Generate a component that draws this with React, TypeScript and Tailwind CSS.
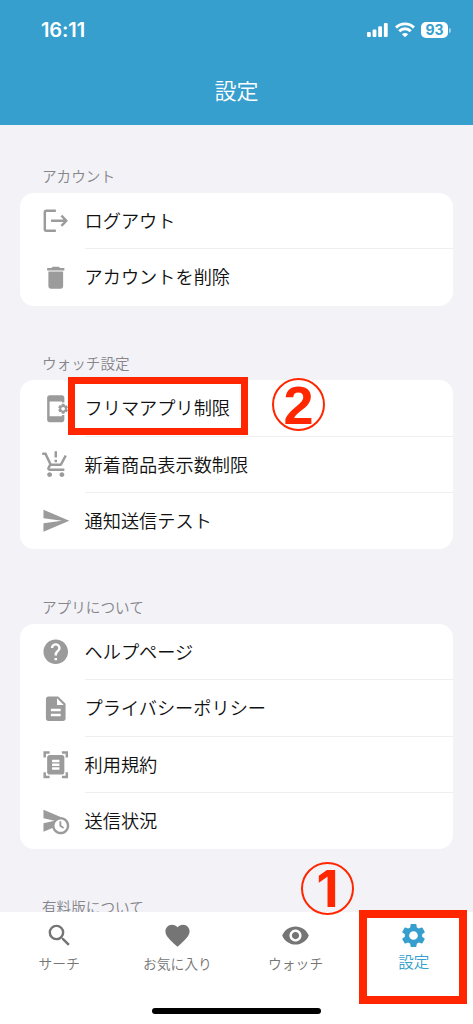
import type { IconType } from 'react-icons';
import {
  MdAppSettingsAlt,
  MdDelete,
  MdDescription,
  MdDocumentScanner,
  MdFavorite,
  MdHelp,
  MdProductionQuantityLimits,
  MdRemoveRedEye,
  MdScheduleSend,
  MdSearch,
  MdSend,
  MdSettings,
} from 'react-icons/md';

function LogoutIcon({ className }: { className?: string }) {
  return (
    <svg viewBox="0 0 24 24" className={className} fill="none" stroke="currentColor" strokeWidth="2">
      <path d="M12.1 3.8H4.3Q3.1 3.8 3.1 5V19Q3.1 20.2 4.3 20.2H12.1" />
      <path d="M8.2 12H20.6M16.6 7.8L20.7 12L16.6 16.2" strokeLinejoin="round" />
    </svg>
  );
}

type Section = {
  title: string;
  items: { label: string; icon: IconType | typeof LogoutIcon }[];
};

const sections: Section[] = [
  {
    title: 'アカウント',
    items: [
      { label: 'ログアウト', icon: LogoutIcon },
      { label: 'アカウントを削除', icon: MdDelete },
    ],
  },
  {
    title: 'ウォッチ設定',
    items: [
      { label: 'フリマアプリ制限', icon: MdAppSettingsAlt },
      { label: '新着商品表示数制限', icon: MdProductionQuantityLimits },
      { label: '通知送信テスト', icon: MdSend },
    ],
  },
  {
    title: 'アプリについて',
    items: [
      { label: 'ヘルプページ', icon: MdHelp },
      { label: 'プライバシーポリシー', icon: MdDescription },
      { label: '利用規約', icon: MdDocumentScanner },
      { label: '送信状況', icon: MdScheduleSend },
    ],
  },
];

const tabs = [
  { label: 'サーチ', icon: MdSearch },
  { label: 'お気に入り', icon: MdFavorite },
  { label: 'ウォッチ', icon: MdRemoveRedEye },
  { label: '設定', icon: MdSettings, active: true },
];

function StatusBar() {
  return (
    <div className="flex h-[60px] items-center justify-between pl-[41px] pr-[22px] text-white">
      <span className="font-['Inter',sans-serif] text-[20px] font-semibold leading-none tracking-[-0.1px]">16:11</span>
      <div className="flex items-center gap-[6px]">
        <svg width="22" height="16" viewBox="0 0 22 16" fill="currentColor">
          <rect x="0" y="10" width="3.8" height="5" rx="1" />
          <rect x="5.6" y="7.4" width="3.8" height="7.6" rx="1" />
          <rect x="11.2" y="4.2" width="3.8" height="10.8" rx="1" />
          <rect x="16.9" y="1" width="3.8" height="14" rx="1" />
        </svg>
        <svg width="20" height="16" viewBox="0 0 20 16" fill="none" stroke="currentColor" strokeWidth="2.9">
          <path d="M1.1 5.6a12.6 12.6 0 0 1 17.8 0" />
          <path d="M4.3 9.3a7.8 7.8 0 0 1 11.4 0" />
          <path d="M10 15.2l-3.1-3a4.3 4.3 0 0 1 6.2 0z" fill="currentColor" stroke="none" />
        </svg>
        <div className="flex items-center gap-px">
          <span className="flex h-4 w-[27px] items-center justify-center rounded-[5px] bg-white font-['Inter',sans-serif] text-[14px] font-bold leading-none text-[#369fce]">
            93
          </span>
          <span className="h-[5px] w-[2px] rounded-r-full bg-white/50" />
        </div>
      </div>
    </div>
  );
}

function SectionTitle({ title }: { title: string }) {
  return <h2 className="h-[22px] pl-[42px] text-[14.6px] leading-[20px] text-[#85858a]">{title}</h2>;
}

export default function App() {
  return (
    <div className="relative flex h-[1024px] w-[473px] flex-col overflow-hidden bg-[#f2f2f7] font-['Noto_Sans_CJK_JP',sans-serif] font-[350]">
      <header className="h-[125px] shrink-0 bg-[#369fce]">
        <StatusBar />
        <h1 className="flex h-[58px] items-center justify-center text-[22px] leading-none text-white">設定</h1>
      </header>

      <main className="min-h-0 flex-1 overflow-hidden pt-[41px]">
        {sections.map((section) => (
          <section key={section.title} className="mb-[47.8px]">
            <SectionTitle title={section.title} />
            <div className="mt-[5px] mr-[20px] ml-[19.5px] overflow-hidden rounded-[14px] bg-white">
              {section.items.map(({ label, icon: Icon }, i) => (
                <div key={label} className="flex h-[56.3px] items-center pl-[21.5px]">
                  <Icon className="size-[29.5px] shrink-0 text-[#9b9b9b]" />
                  <div
                    className={`ml-[14px] flex h-full flex-1 items-center text-[18.2px] text-[#111] ${
                      i < section.items.length - 1 ? 'border-b border-[#efeff1]' : 'pb-px'
                    }`}
                  >
                    {label}
                  </div>
                </div>
              ))}
            </div>
          </section>
        ))}
        <SectionTitle title="有料版について" />
      </main>

      {/* Tab bar */}
      <nav className="flex h-[112px] shrink-0 flex-col bg-white">
        <div className="flex flex-1">
          {tabs.map(({ label, icon: Icon, active }) => (
            <div
              key={label}
              className={`flex flex-1 flex-col items-center pt-[9px] ${active ? 'text-[#369fce]' : 'text-[#757575]'}`}
            >
              <Icon className="size-[29px]" />
              <span className={active ? 'mt-px text-[15.6px] leading-[20px]' : 'mt-[3px] text-[13.8px] leading-[20px]'}>
                {label}
              </span>
            </div>
          ))}
        </div>
        <div className="mx-auto mb-[10px] h-[6px] w-[169px] rounded-full bg-black" />
      </nav>

      {/* Step markers */}
      <div className="absolute left-[67.5px] top-[377px] h-[58px] w-[180.5px] border-[7px] border-[#ff2600]" />
      <div className="absolute left-[272px] top-[378px] flex size-[53px] items-center justify-center rounded-full border-2 border-[#ff2600] font-['Liberation_Sans',sans-serif] text-[54px] font-bold leading-none text-[#ff2600]">
        2
      </div>
      <div className="absolute left-[359px] top-[910px] h-[94px] w-[108px] border-8 border-[#ff2600]" />
      <div className="absolute left-[301px] top-[862px] flex size-[53px] items-center justify-center rounded-full border-2 border-[#ff2600] font-['Inter',sans-serif] text-[51px] font-bold leading-none text-[#ff2600]">
        1
      </div>
    </div>
  );
}
